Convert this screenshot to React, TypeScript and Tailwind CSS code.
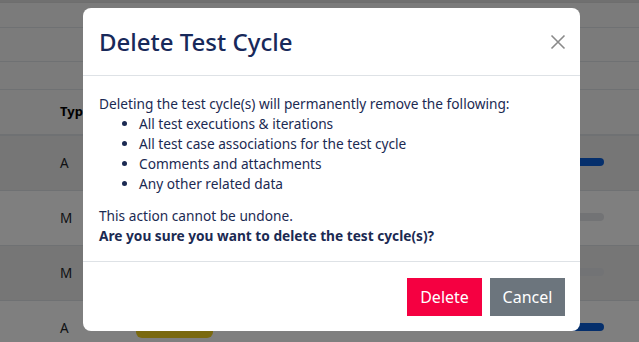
import React from "react";

const rows = [
  { letter: "A", dark: true, bar: "blue" },
  { letter: "M", dark: false, bar: "gray" },
  { letter: "M", dark: true, bar: "gray" },
  { letter: "A", dark: false, bar: "blue" },
];

export default function App() {
  return (
    <div
      className="relative w-[639px] h-[342px] overflow-hidden bg-white"
      style={{ fontFamily: '"Noto Sans", "Open Sans", sans-serif' }}
    >
      {/* Background table */}
      <div className="flex flex-col w-full">
        <div className="h-[3px] bg-[#e0e0e0] border-b border-[#dcdcdc]" />
        <div className="h-[25px] border-b border-[#dee2e6] bg-[#f6f6f6]" />
        <div className="h-[34px] border-b border-[#dee2e6] bg-[#f6f6f6]" />
        <div className="h-[28px] border-b border-[#dee2e6] bg-[#f6f6f6]" />
        <div className="h-[46px] border-b-2 border-[#dee2e6] bg-[#f6f6f6] flex items-center pl-[60px] text-[13px] font-bold text-black">
          Typ
        </div>
        {rows.map((r, i) => (
          <div
            key={i}
            className={`h-[55px] border-b border-[#dee2e6] flex items-center pl-[60px] relative ${
              r.dark ? "bg-[#ececec]" : "bg-[#ffffff]"
            }`}
          >
            <span className="text-[13.5px] text-[#212529] pt-[1px]">{r.letter}</span>
            <div
              className={`absolute left-[560px] top-[22px] w-[44px] h-[8px] rounded-full ${
                r.bar === "blue" ? "bg-[#0a5fd8]" : "bg-[#e4e6ea]"
              }`}
            />
            {i === 3 && (
              <div className="absolute left-[136px] top-[16px] w-[77px] h-[21px] rounded-[6px] bg-[#f5d31e]" />
            )}
          </div>
        ))}
      </div>

      {/* Overlay */}
      <div className="absolute inset-0 bg-black/50" />

      {/* Modal */}
      <div className="absolute left-[83px] top-[8px] w-[497px] h-[323px] rounded-[8px] bg-white flex flex-col text-[#1b2a52]">
        <div className="h-[68px] flex items-center justify-between pl-[16px] pr-[14px] border-b border-[#dee2e6] shrink-0">
          <h2 className="text-[24px] font-medium text-[#18295a] leading-none">Delete Test Cycle</h2>
          <svg width="16" height="16" viewBox="0 0 16 16" className="text-[#8a8a8a]">
            <path d="M1.5 1.5 L14.5 14.5 M14.5 1.5 L1.5 14.5" stroke="currentColor" strokeWidth="1.6" />
          </svg>
        </div>
        <div className="flex-1 px-[16px] pt-[18px] text-[13.7px] leading-[20px]">
          <p>Deleting the test cycle(s) will permanently remove the following:</p>
          <ul className="list-disc pl-[40px] mb-[12px]">
            <li>All test executions &amp; iterations</li>
            <li>All test case associations for the test cycle</li>
            <li>Comments and attachments</li>
            <li>Any other related data</li>
          </ul>
          <p>This action cannot be undone.</p>
          <p className="font-bold">Are you sure you want to delete the test cycle(s)?</p>
        </div>
        <div className="h-[70px] border-t border-[#dee2e6] flex items-center justify-end gap-[8px] pr-[15px] shrink-0">
          <button className="w-[75px] h-[38px] bg-[#f50041] text-white text-[16px]">Delete</button>
          <button className="w-[75px] h-[38px] bg-[#6c757d] text-white text-[16px]">Cancel</button>
        </div>
      </div>
    </div>
  );
}
